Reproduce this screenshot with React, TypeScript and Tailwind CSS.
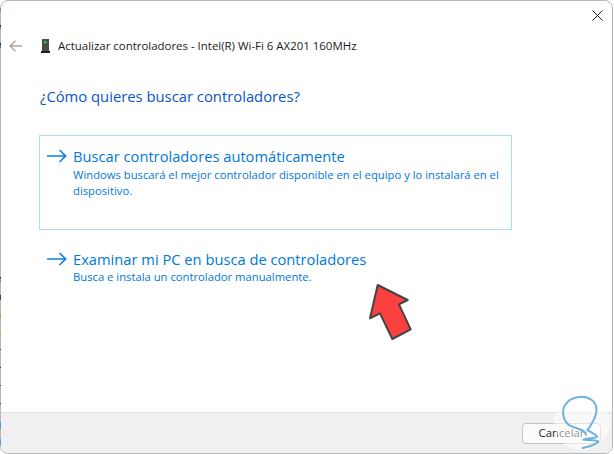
import React from "react";

const fontStack = "font-['Open_Sans','Noto_Sans',sans-serif]";

// bits of the windows behind that peek out on the left edge
const edgeMarks = [
  { y: 8, h: 4, color: "#4fa3b5" },
  { y: 25, h: 2, color: "#333333" },
  { y: 27, h: 3, color: "#b08a50" },
  { y: 43, h: 2, color: "#333333" },
  { y: 45, h: 3, color: "#3f78a8" },
  { y: 277, h: 2, color: "#444444" },
  { y: 280, h: 2, color: "#a08050" },
  { y: 295, h: 5, color: "#7a2a5a" },
  { y: 313, h: 5, color: "#b0a070" },
  { y: 334, h: 2, color: "#e0a040" },
  { y: 349, h: 1, color: "#8a3060" },
  { y: 367, h: 1, color: "#444444" },
  { y: 385, h: 1, color: "#444444" },
  { y: 403, h: 1, color: "#444444" },
  { y: 422, h: 7, color: "#4fa0d8" },
  { y: 439, h: 6, color: "#4fa0d8" },
];

const ArrowIcon = () => (
  <svg width="20" height="14" viewBox="0 0 20 14" fill="none" stroke="#0a84e0" strokeWidth="1.6" className="shrink-0">
    <path d="M0 7h18.5M12.5 1l6.2 6-6.2 6" />
  </svg>
);

const DeviceIcon = () => (
  <svg width="9" height="14" viewBox="0 0 9 14" className="shrink-0">
    <rect x="1" y="0" width="7" height="12" fill="#4a4a4a" />
    <rect x="0" y="12" width="9" height="2" fill="#222222" />
    <rect x="3" y="2" width="2.5" height="2.5" fill="#1fd43a" />
  </svg>
);

const BackIcon = () => (
  <svg width="13" height="12" viewBox="0 0 13 12" fill="none" stroke="#a6a6a6" strokeWidth="1.3">
    <path d="M13 6H1M6.5 .7L1 6l5.5 5.3" />
  </svg>
);

const Option = ({ title, children, boxed }: { title: string; children: React.ReactNode; boxed?: boolean }) => (
  <div className={`w-[473px] px-[7px] border ${boxed ? "border-[#a8def5] h-[95px] pt-[9px]" : "border-transparent h-[60px] pt-[10px]"}`}>
    <div className="flex items-center gap-[6px] h-[22px]">
      <ArrowIcon />
      <span className="text-[14.7px] leading-[22px] text-[#0078d7]">{title}</span>
    </div>
    <p className={`ml-[26px] text-[11.25px] leading-[16px] text-[#0078d7] ${boxed ? "" : "-mt-[1px]"}`}>{children}</p>
  </div>
);

export default function App() {
  return (
    <div className={`relative w-[614px] h-[454px] bg-white overflow-hidden ${fontStack}`}>
      <div className="flex flex-col w-[613px] h-[454px] border border-[#b8b8b8] rounded-[8px] overflow-hidden bg-white">
        <div className="flex justify-end h-[30px] pt-[9px] pr-[9px]">
          <svg width="11" height="11" viewBox="0 0 11 11" stroke="#222222" strokeWidth="1" fill="none">
            <path d="M.5 .5l10 10M10.5 .5l-10 10" />
          </svg>
        </div>
        <div className="flex items-center h-[29px] pl-[8px]">
          <BackIcon />
          <div className="ml-[19px]"><DeviceIcon /></div>
          <span className="ml-[8px] text-[11.45px] text-[#1a1a1a]">Actualizar controladores - Intel(R) Wi-Fi 6 AX201 160MHz</span>
        </div>
        <h1 className="ml-[39px] mt-[24px] text-[14.8px] leading-[24px] font-normal text-[#0a55c5]">¿Cómo quieres buscar controladores?</h1>
        <div className="ml-[38px] mt-[27px] flex flex-col gap-[7px]">
          <Option title="Buscar controladores automáticamente" boxed>
            Windows buscará el mejor controlador disponible en el equipo y lo instalará en el dispositivo.
          </Option>
          <Option title="Examinar mi PC en busca de controladores">
            Busca e instala un controlador manualmente.
          </Option>
        </div>
        <div className="mt-auto flex justify-end items-center h-[41px] bg-[#f0f0f0] border-t border-[#e2e2e2] pr-[11px]">
          <button className="w-[79px] h-[21px] bg-[#fbfbfb] border border-[#c4c4c4] rounded-[4px] text-[11.3px] text-[#1a1a1a]">Cancelar</button>
        </div>
      </div>

      {edgeMarks.map((m) => (
        <div key={m.y} className="absolute left-0 w-[1px]" style={{ top: m.y, height: m.h, backgroundColor: m.color }} />
      ))}

      {/* red pointer */}
      <svg className="absolute left-[340px] top-[270px]" width="90" height="90" viewBox="0 0 270 270">
        <path d="M113 45L203 90L177 103L212 178L157 207L120 130L90 145Z" fill="#fb4040" stroke="#444444" strokeWidth="6" strokeLinejoin="round" />
      </svg>

      {/* watermark */}
      <svg className="absolute left-[480px] top-[374px]" width="134" height="80" viewBox="0 0 402 240" fill="none">
        <circle cx="306" cy="145" r="84" fill="#ffffff" fillOpacity="0.5" />
        <path d="M318 182C315 165 290 165 270 155C248 142 244 110 256 92C270 70 310 60 335 78C358 95 350 120 340 140C333 155 330 160 322 168C335 175 345 180 352 188C345 195 325 190 310 197C325 197 345 197 355 202C345 215 325 218 308 222" stroke="#6fb3dc" strokeWidth="6" strokeLinecap="round" strokeLinejoin="round" />
      </svg>
    </div>
  );
}
